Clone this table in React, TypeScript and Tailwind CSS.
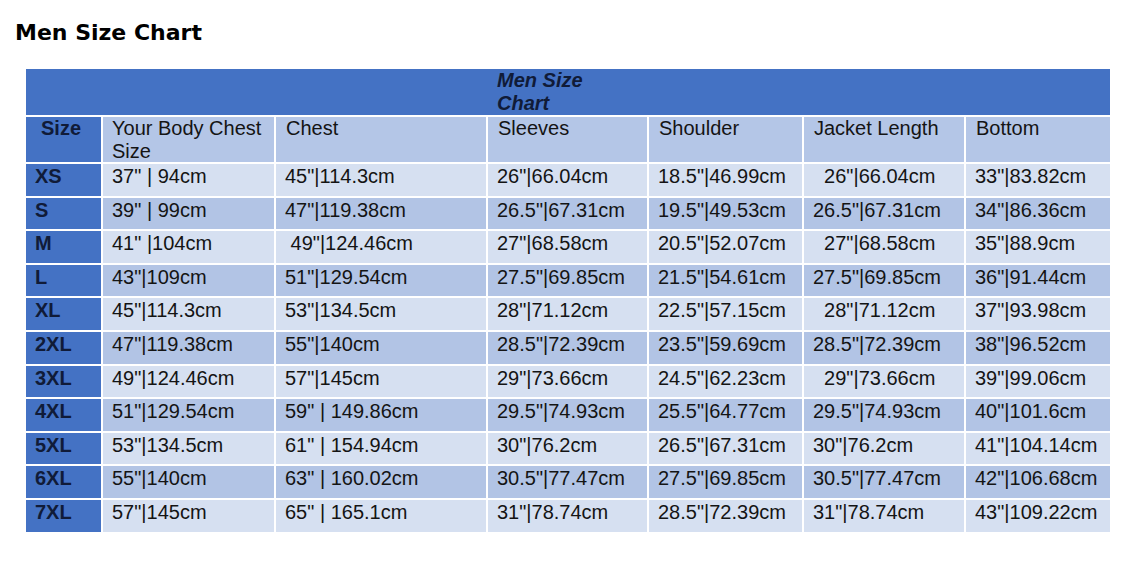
const rows: [string, string, string, string, string, string, string][] = [
  ['XS', '37" | 94cm', '45"|114.3cm', '26"|66.04cm', '18.5"|46.99cm', '  26"|66.04cm', '33"|83.82cm'],
  ['S', '39" | 99cm', '47"|119.38cm', '26.5"|67.31cm', '19.5"|49.53cm', '26.5"|67.31cm', '34"|86.36cm'],
  ['M', '41" |104cm', ' 49"|124.46cm', '27"|68.58cm', '20.5"|52.07cm', '  27"|68.58cm', '35"|88.9cm'],
  ['L', '43"|109cm', '51"|129.54cm', '27.5"|69.85cm', '21.5"|54.61cm', '27.5"|69.85cm', '36"|91.44cm'],
  ['XL', '45"|114.3cm', '53"|134.5cm', '28"|71.12cm', '22.5"|57.15cm', '  28"|71.12cm', '37"|93.98cm'],
  ['2XL', '47"|119.38cm', '55"|140cm', '28.5"|72.39cm', '23.5"|59.69cm', '28.5"|72.39cm', '38"|96.52cm'],
  ['3XL', '49"|124.46cm', '57"|145cm', '29"|73.66cm', '24.5"|62.23cm', '  29"|73.66cm', '39"|99.06cm'],
  ['4XL', '51"|129.54cm', '59" | 149.86cm', '29.5"|74.93cm', '25.5"|64.77cm', '29.5"|74.93cm', '40"|101.6cm'],
  ['5XL', '53"|134.5cm', '61" | 154.94cm', '30"|76.2cm', '26.5"|67.31cm', '30"|76.2cm', '41"|104.14cm'],
  ['6XL', '55"|140cm', '63" | 160.02cm', '30.5"|77.47cm', '27.5"|69.85cm', '30.5"|77.47cm', '42"|106.68cm'],
  ['7XL', '57"|145cm', '65" | 165.1cm', '31"|78.74cm', '28.5"|72.39cm', '31"|78.74cm', '43"|109.22cm'],
];

const headers = ['Chest', 'Sleeves', 'Shoulder', 'Jacket Length', 'Bottom'];

export default function App() {
  return (
    <div className="w-[1140px] h-[563px] bg-white overflow-hidden">
      <h1 className="ml-[15px] pt-[20px] text-[22px] leading-[26px] font-bold text-black font-['DejaVu_Sans',sans-serif]">
        Men Size Chart
      </h1>

      <div className="mt-[23px] ml-[26px] w-[1084px] grid grid-cols-[75px_171px_210px_159px_153px_160px_144px] gap-[2px] font-['Liberation_Sans',Arial,sans-serif] text-[20px] leading-[23px]">
        <div className="col-span-7 h-[46px] bg-[#4472c4] pl-[471px] font-bold italic text-[#101b38]">
          Men Size
          <br />
          Chart
        </div>

        <div className="h-[45px] bg-[#4472c4] pl-[15px] font-bold text-[#101b38]">Size</div>
        <div className="h-[45px] bg-[#b4c6e7] pl-[9px] text-[#141414]">
          Your Body Chest
          <br />
          Size
        </div>
        {headers.map((h) => (
          <div key={h} className="h-[45px] bg-[#b4c6e7] pl-[10px] text-[#141414]">
            {h}
          </div>
        ))}

        {rows.map((r, i) => {
          const bg = i % 2 === 0 ? 'bg-[#d6e0f1]' : 'bg-[#b2c4e5]';
          return (
            <div key={r[0]} className="contents">
              <div className="h-[31.6px] bg-[#4472c4] pl-[9px] pt-[1px] font-bold text-[#101b38]">{r[0]}</div>
              {r.slice(1).map((c, j) => (
                <div key={j} className={`h-[31.6px] ${bg} pl-[9px] pt-[1px] whitespace-pre text-[#141414]`}>
                  {c}
                </div>
              ))}
            </div>
          );
        })}
      </div>
    </div>
  );
}
